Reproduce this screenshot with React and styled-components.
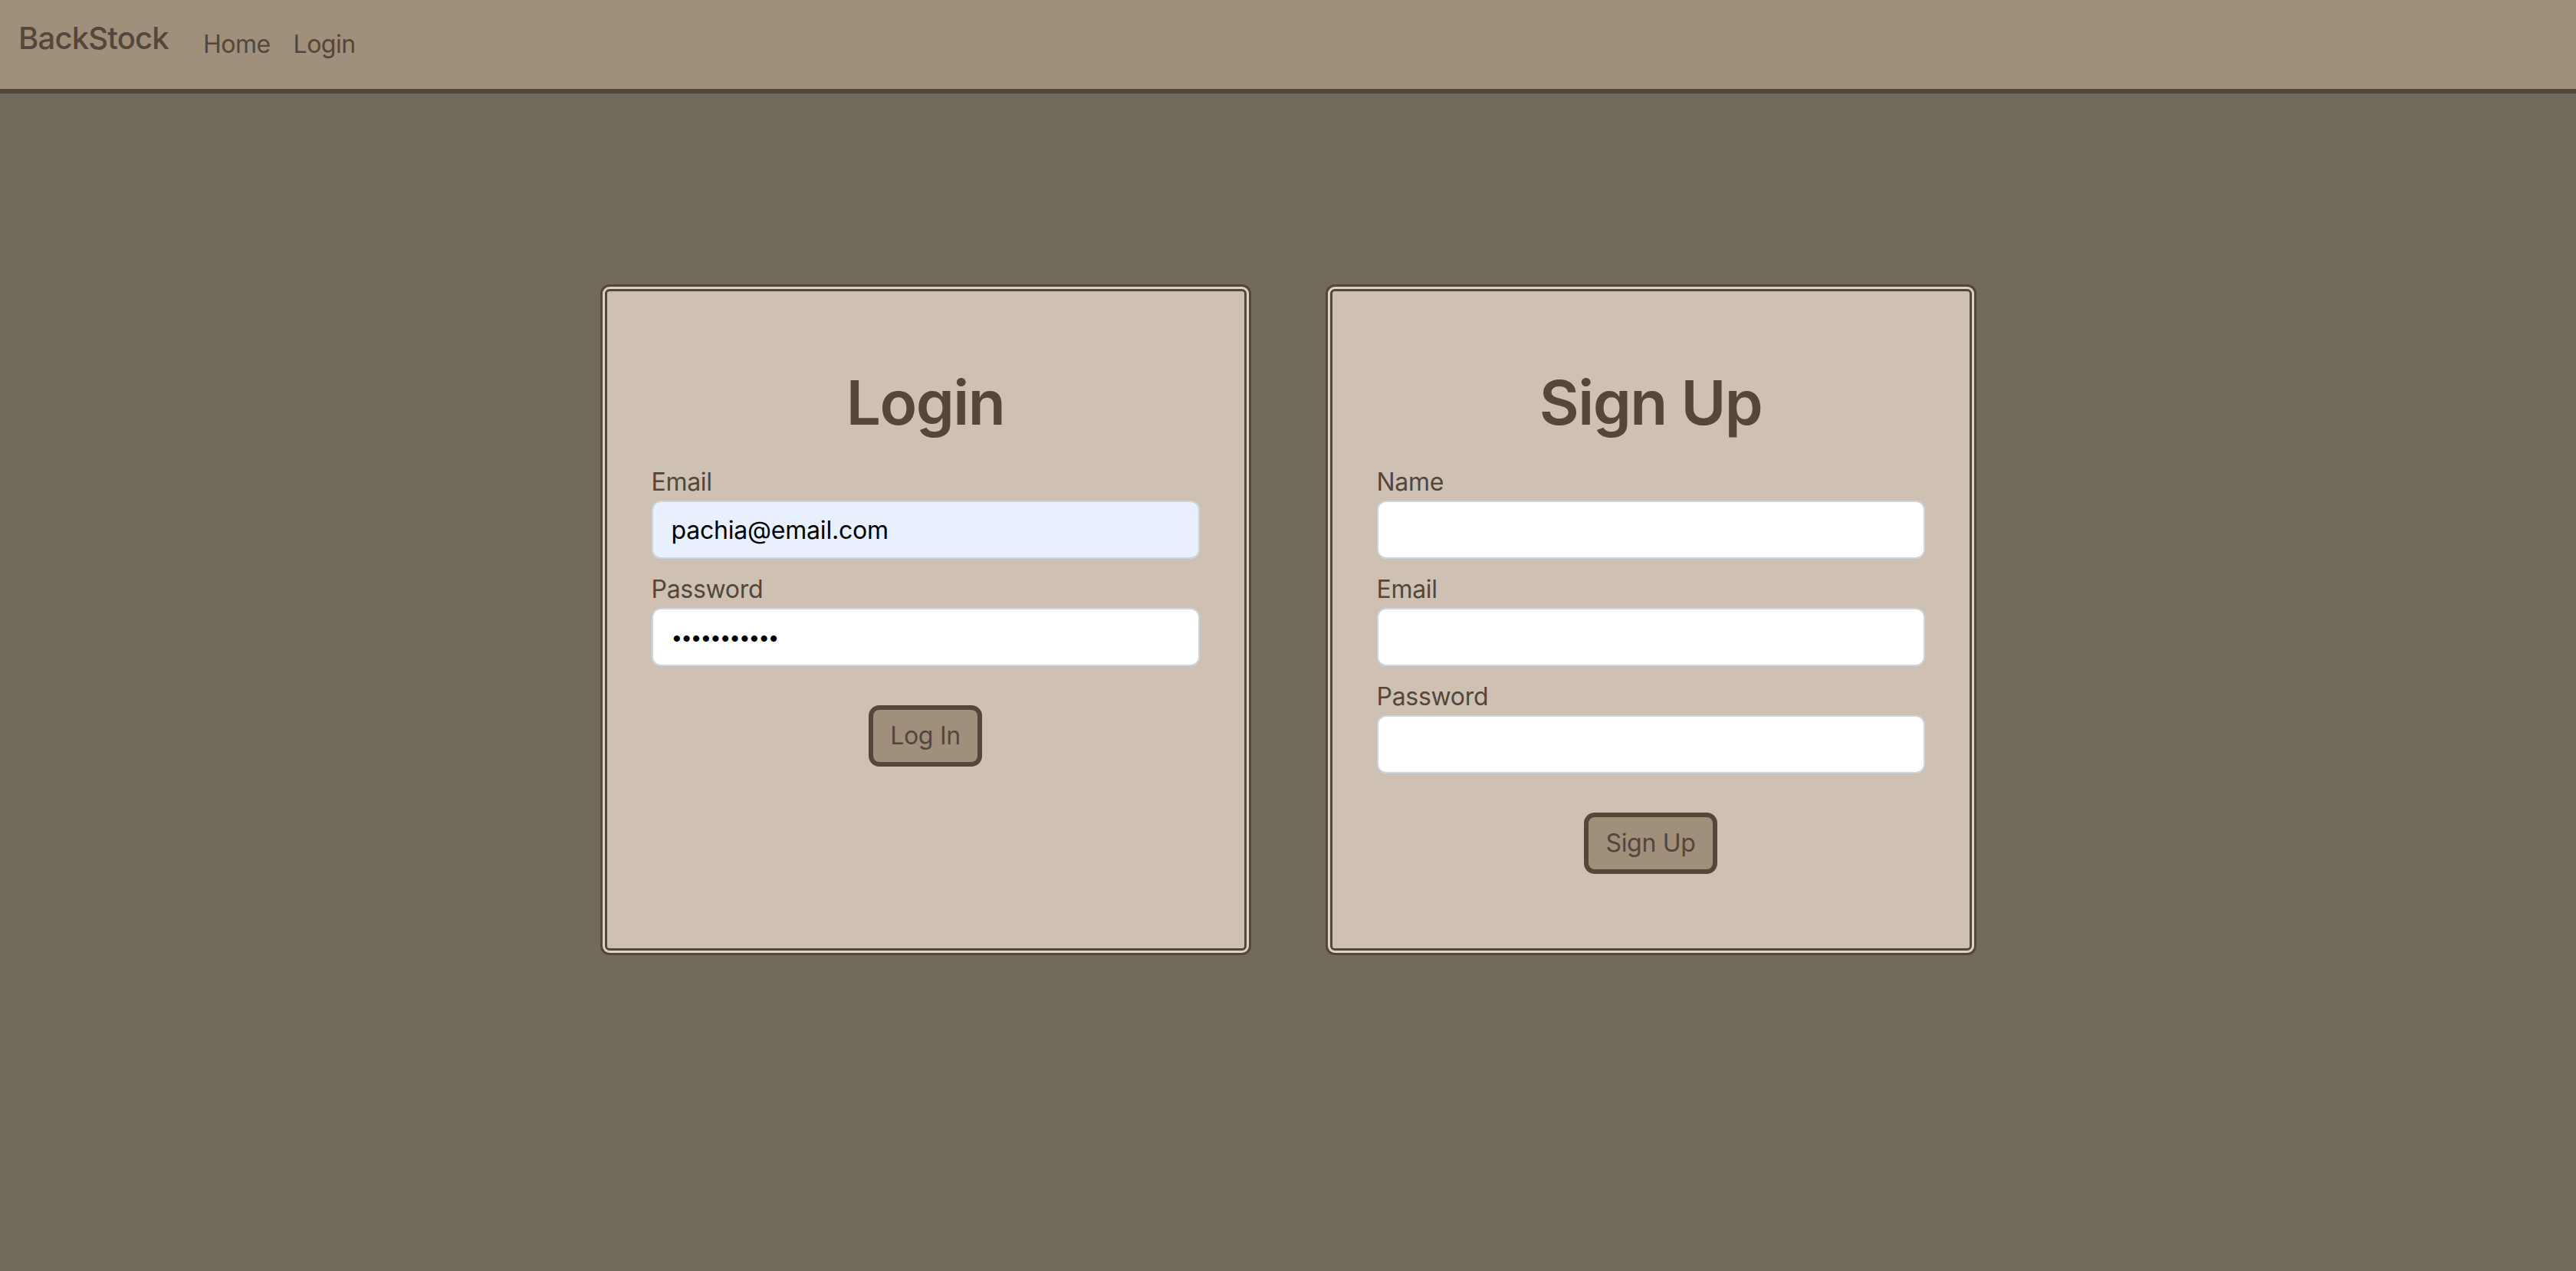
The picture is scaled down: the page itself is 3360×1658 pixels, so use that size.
import React from "react";
//style
import styled, { createGlobalStyle } from "styled-components";

const GlobalStyle = createGlobalStyle`
  html, body {
    margin: 0;
    padding: 0;
    min-height: 100vh;
    background: #726a5a;
    font-family: Inter, "Liberation Sans", sans-serif;
  }
  * {
    box-sizing: border-box;
  }
`;

const Nav = () => {
  return (
    <NavBar>
      <Brand href="#">BackStock</Brand>
      <NavLinks>
        <NavLink href="#">Home</NavLink>
        <NavLink href="#">Login</NavLink>
      </NavLinks>
    </NavBar>
  );
};

const Field = ({ label, type = "text", value, autofill }) => (
  <FieldGroup>
    <Label>{label}</Label>
    <Input
      type={type}
      defaultValue={value}
      $autofill={autofill}
      $secret={type === "password"}
    />
  </FieldGroup>
);

const App = () => {
  return (
    <>
      <GlobalStyle />
      <Nav />
      <Main>
        <Card>
          <Title>Login</Title>
          <Field label="Email" value="pachia@email.com" autofill />
          <Field label="Password" type="password" value="pachiapass1" />
          <Actions>
            <Button>Log In</Button>
          </Actions>
        </Card>
        <Card>
          <Title>Sign Up</Title>
          <Field label="Name" />
          <Field label="Email" />
          <Field label="Password" type="password" />
          <Actions>
            <Button>Sign Up</Button>
          </Actions>
        </Card>
      </Main>
    </>
  );
};

const NavBar = styled.nav`
  height: 122px;
  background: #a08f7b;
  border-bottom: 6px solid #54463a;
  display: flex;
  align-items: flex-start;
  padding: 0 24px;
`;

const Brand = styled.a`
  font-size: 40px;
  line-height: 60px;
  font-weight: 500;
  margin-top: 20px;
  margin-right: 30px;
  color: #54463a;
  text-decoration: none;
  letter-spacing: -0.8px;
`;

const NavLinks = styled.div`
  display: flex;
  margin-top: 34px;
`;

const NavLink = styled.a`
  font-size: 32px;
  line-height: 48px;
  padding: 0 15px;
  color: #54463a;
  text-decoration: none;
  letter-spacing: -0.5px;
`;

const Main = styled.main`
  display: grid;
  grid-template-columns: 837px 837px;
  justify-content: center;
  column-gap: 109px;
  padding-top: 255px;
`;

const Card = styled.section`
  background: #cec1b3;
  border: 3px solid #54463a;
  border-radius: 6px;
  box-shadow: 0 0 0 3px #ddd2c4, 0 0 0 6px #54463a;
  padding: 97px 58px;
  display: flex;
  flex-direction: column;
`;

const Title = styled.h1`
  margin: 0 0 32px;
  font-size: 80px;
  line-height: 96px;
  font-weight: 600;
  text-align: center;
  color: #54463a;
  letter-spacing: -1.5px;
`;

const FieldGroup = styled.div`
  display: flex;
  flex-direction: column;
  margin-bottom: 16px;
`;

const Label = styled.label`
  font-size: 32px;
  line-height: 48px;
  color: #54463a;
  letter-spacing: -0.3px;
`;

const Input = styled.input`
  height: 76px;
  padding: 12px 24px;
  font-size: ${(p) => (p.$secret ? "26px" : "32px")};
  letter-spacing: ${(p) => (p.$secret ? "-2px" : "-0.2px")};
  font-family: Inter, "Liberation Sans", sans-serif;
  color: #000;
  background: ${(p) => (p.$autofill ? "#e8f0fe" : "#fff")};
  border: 2px solid #ced4da;
  border-radius: 12px;
  outline: none;
  caret-color: #000;
`;

const Actions = styled.div`
  display: flex;
  justify-content: center;
  margin-top: 35px;
`;

const Button = styled.button`
  font-family: Inter, "Liberation Sans", sans-serif;
  font-size: 32px;
  line-height: 48px;
  padding: 10px 22px;
  color: #54463a;
  background: #a08f7b;
  border: 6px solid #54463a;
  border-radius: 14px;
  letter-spacing: -0.3px;
  cursor: pointer;
`;

export default App;
